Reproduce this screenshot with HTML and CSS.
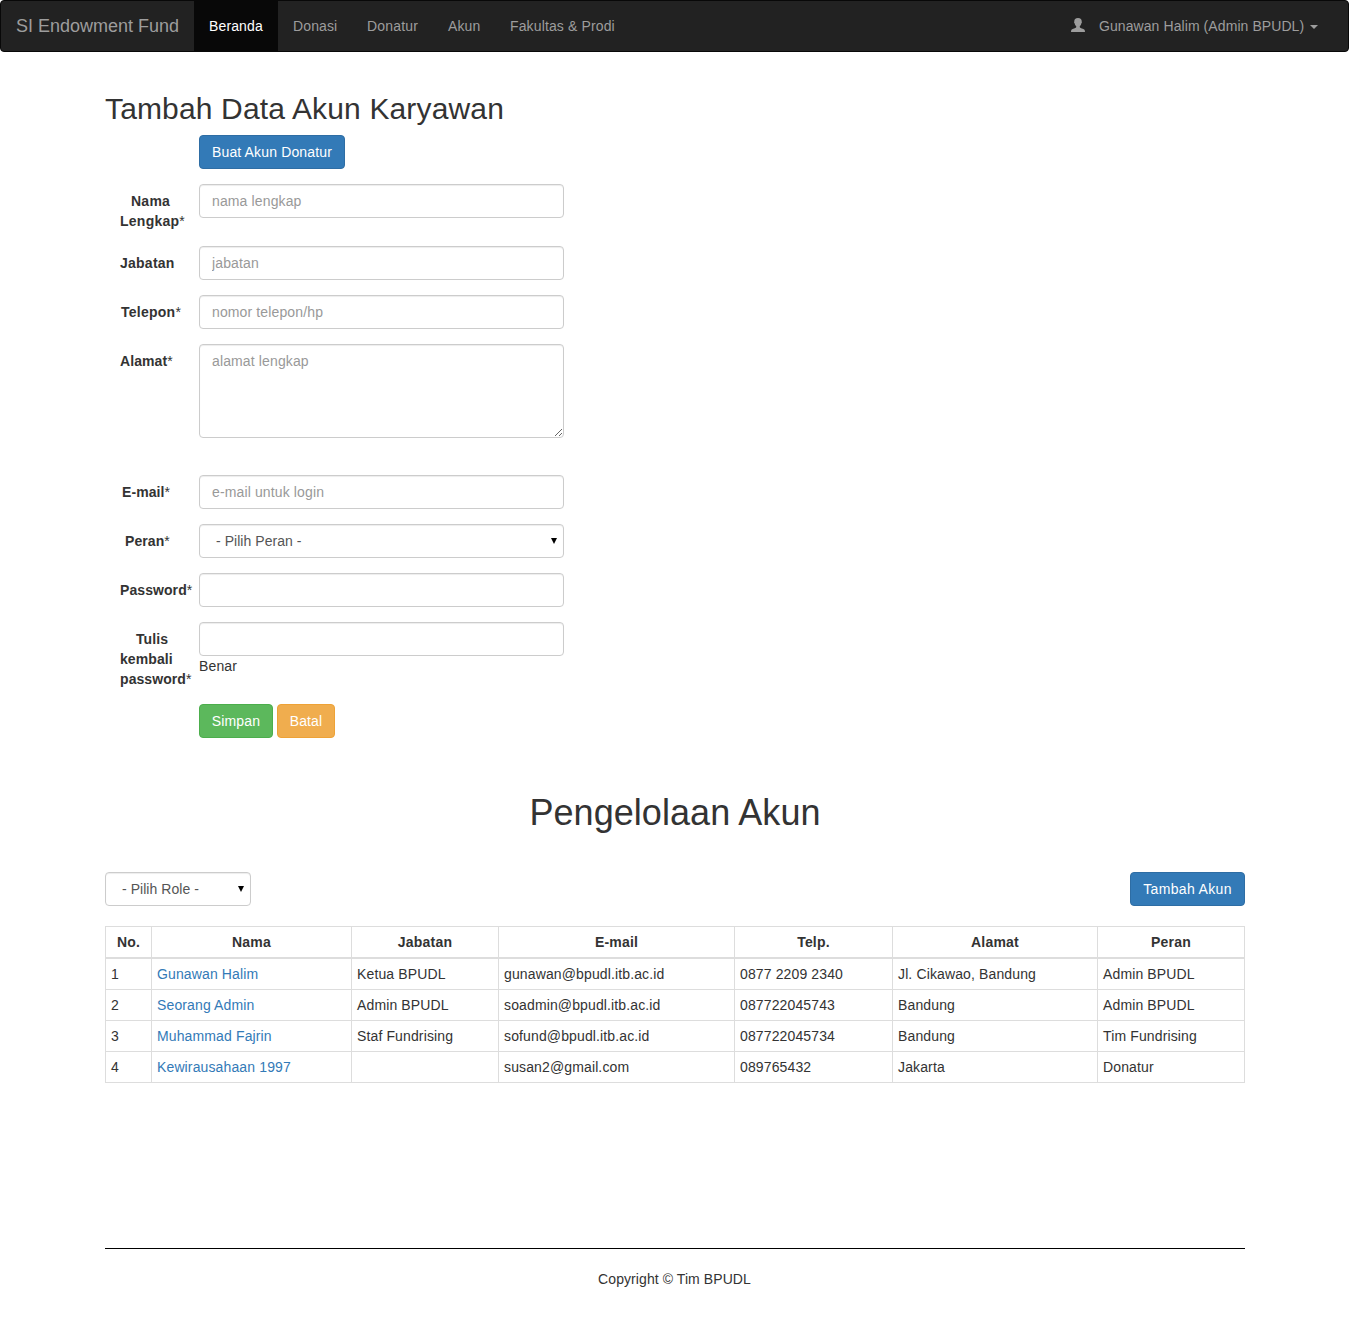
FILE: index.html
```html
<!DOCTYPE html>
<html lang="id">
<head>
<meta charset="utf-8">
<title>SI Endowment Fund</title>
<link rel="stylesheet" href="styles.css">
</head>
<body>
<nav class="navbar">
  <a class="brand" href="#">SI Endowment Fund</a>
  <a class="tab tab-home active" href="#">Beranda</a>
  <a class="tab tab-donasi" href="#">Donasi</a>
  <a class="tab tab-donatur" href="#">Donatur</a>
  <a class="tab tab-akun" href="#">Akun</a>
  <a class="tab tab-prodi" href="#">Fakultas &amp; Prodi</a>
  <a class="user" href="#">
    <svg class="user-icon" width="14" height="14" viewBox="0 0 14 14"><path d="M7 0C4.4 0 3.2 1.3 3.3 3.4C2.9 3.8 3.1 4.9 3.7 5.4C4 6.8 4.6 7.5 5.2 8V9.3C4.9 10 3.6 10.3 2.2 10.8C.6 11.4 0 12 0 14H14C14 12 13.4 11.4 11.8 10.8C10.4 10.3 9.1 10 8.8 9.3V8C9.4 7.5 10 6.8 10.3 5.4C10.9 4.9 11.1 3.8 10.7 3.4C10.8 1.3 9.6 0 7 0Z" fill="currentColor"/></svg>
    <span class="user-name">Gunawan Halim (Admin BPUDL)</span>
    <span class="caret"></span>
  </a>
</nav>
<main class="container">
  <h2 class="form-title">Tambah Data Akun Karyawan</h2>
  <form class="form">
    <div class="row"><div class="field"><button type="button" class="btn btn-primary btn-donor">Buat Akun Donatur</button></div></div>
    <div class="row"><label class="label indent-name"><b>Nama<br>Lengkap</b>*</label><div class="field"><input class="control" type="text" placeholder="nama lengkap"></div></div>
    <div class="row"><label class="label"><b>Jabatan</b></label><div class="field"><input class="control" type="text" placeholder="jabatan"></div></div>
    <div class="row"><label class="label indent-phone"><b>Telepon</b>*</label><div class="field"><input class="control" type="text" placeholder="nomor telepon/hp"></div></div>
    <div class="row row-address"><label class="label label-tight"><b>Alamat</b>*</label><div class="field"><textarea class="control area" placeholder="alamat lengkap"></textarea></div></div>
    <div class="row"><label class="label label-tight indent-mail"><b>E-mail</b>*</label><div class="field"><input class="control" type="text" placeholder="e-mail untuk login"></div></div>
    <div class="row"><label class="label label-tight indent-role"><b>Peran</b>*</label><div class="field select"><select class="control"><option>- Pilih Peran -</option></select></div></div>
    <div class="row"><label class="label label-tight"><b>Password</b>*</label><div class="field"><input class="control" type="password"></div></div>
    <div class="row"><label class="label label-tight indent-repeat"><b>Tulis<br>kembali<br>password</b>*</label><div class="field"><input class="control" type="password"><div class="hint">Benar</div></div></div>
    <div class="row"><div class="field actions"><button type="button" class="btn btn-success">Simpan</button><button type="button" class="btn btn-warning">Batal</button></div></div>
  </form>
  <h1 class="page-title">Pengelolaan Akun</h1>
  <div class="toolbar">
    <div class="select select-role"><select class="control"><option>- Pilih Role -</option></select></div>
    <button type="button" class="btn btn-primary btn-add">Tambah Akun</button>
  </div>
  <table class="accounts">
    <colgroup><col class="c-no"><col class="c-name"><col class="c-job"><col class="c-mail"><col class="c-phone"><col class="c-address"><col class="c-role"></colgroup>
    <thead><tr><th>No.</th><th>Nama</th><th>Jabatan</th><th>E-mail</th><th>Telp.</th><th>Alamat</th><th>Peran</th></tr></thead>
    <tbody>
      <tr><td>1</td><td><a href="#">Gunawan Halim</a></td><td>Ketua BPUDL</td><td>gunawan@bpudl.itb.ac.id</td><td>0877 2209 2340</td><td>Jl. Cikawao, Bandung</td><td>Admin BPUDL</td></tr>
      <tr><td>2</td><td><a href="#">Seorang Admin</a></td><td>Admin BPUDL</td><td>soadmin@bpudl.itb.ac.id</td><td>087722045743</td><td>Bandung</td><td>Admin BPUDL</td></tr>
      <tr><td>3</td><td><a href="#">Muhammad Fajrin</a></td><td>Staf Fundrising</td><td>sofund@bpudl.itb.ac.id</td><td>087722045734</td><td>Bandung</td><td>Tim Fundrising</td></tr>
      <tr><td>4</td><td><a href="#">Kewirausahaan 1997</a></td><td></td><td>susan2@gmail.com</td><td>089765432</td><td>Jakarta</td><td>Donatur</td></tr>
    </tbody>
  </table>
  <footer class="footer">Copyright © Tim BPUDL</footer>
</main>
</body>
</html>
```
FILE: styles.css
```css
* { box-sizing: border-box; }
body { margin: 0; font: 14px/20px "Liberation Sans", Arial, sans-serif; color: #333; background: #fff; letter-spacing: .13px; }
a { color: #337ab7; text-decoration: none; }

.navbar { display: flex; height: 52px; border: 1px solid #080808; border-radius: 4px; background: #222; }
.navbar a { color: #9d9d9d; }
.brand { width: 193px; padding: 15px; font-size: 18px; white-space: nowrap; letter-spacing: 0; }
.tab { padding: 15px; white-space: nowrap; }
.tab-home { width: 84px; }
.tab-donasi { width: 74px; }
.tab-donatur { width: 81px; letter-spacing: .2px; }
.tab-akun { width: 62px; }
.tab-prodi { width: 136px; }
.navbar .active { background: #080808; color: #fff; }
.user { display: flex; align-items: center; margin-left: auto; padding-right: 30px; }
.user-icon { margin: -2px 14px 0 0; }
.user-name { width: 206px; white-space: nowrap; letter-spacing: .08px; }
.caret { margin: 2px 0 0 5px; border-top: 4px solid; border-left: 4px solid transparent; border-right: 4px solid transparent; }

.container { width: 1140px; margin: 40px 0 0 105px; }
h1, h2 { margin: 0; font-weight: normal; }
.form-title { margin-bottom: 10px; font-size: 30px; line-height: 33px; letter-spacing: .15px; }
.row { display: grid; grid-template-columns: 79px 365px; padding-left: 15px; margin-bottom: 15px; }
.field { grid-column: 2; }
.row-address { margin-bottom: 37px; }
.label { padding-top: 7px; white-space: nowrap; letter-spacing: .25px; }
.label-tight { letter-spacing: .08px; }
.indent-name { text-indent: 11px; }
.indent-phone { text-indent: 1px; }
.indent-mail { text-indent: 2px; }
.indent-role { text-indent: 5px; }
.indent-repeat { text-indent: 16px; }
.control { display: block; width: 100%; height: 34px; margin: 0; padding: 6px 12px; border: 1px solid #ccc; border-radius: 4px; background: #fff; color: #555; font: inherit; letter-spacing: inherit; box-shadow: inset 0 1px 1px rgba(0,0,0,.075); }
.control::placeholder { color: #999; }
.area { height: 94px; }
.select { position: relative; letter-spacing: .05px; }
.select .control { appearance: none; padding-left: 16px; }
.select::after { content: ""; position: absolute; right: 7px; top: 14px; border-top: 6px solid #000; border-left: 3px solid transparent; border-right: 3px solid transparent; }
.hint { height: 20px; }
.actions { display: flex; gap: 4px; }
.btn { display: block; height: 34px; padding: 6px 0; border: 1px solid; border-radius: 4px; color: #fff; font: inherit; letter-spacing: .15px; text-align: center; }
.btn-primary { background: #337ab7; border-color: #2e6da4; }
.btn-donor { width: 146px; }
.btn-success { width: 74px; background: #5cb85c; border-color: #4cae4c; }
.btn-warning { width: 58px; background: #f0ad4e; border-color: #eea236; }
.btn-add { width: 115px; letter-spacing: .35px; }

.page-title { margin-top: 55px; font-size: 36px; line-height: 40px; text-align: center; letter-spacing: .05px; }
.toolbar { display: flex; justify-content: space-between; margin: 39px 0 20px; }
.select-role { width: 146px; }

.accounts { width: 1140px; table-layout: fixed; border-collapse: collapse; }
.accounts th, .accounts td { padding: 5px; border: 1px solid #ddd; text-align: left; white-space: nowrap; }
.accounts th { border-bottom-width: 2px; text-align: center; letter-spacing: .2px; }
.c-no { width: 46px; }
.c-name { width: 200px; }
.c-job { width: 147px; }
.c-mail { width: 236px; }
.c-phone { width: 158px; }
.c-address { width: 205px; }
.c-role { width: 147px; }

.footer { margin-top: 165px; padding: 20px 1px 0 0; border-top: 1px solid #000; text-align: center; letter-spacing: .08px; }
```
